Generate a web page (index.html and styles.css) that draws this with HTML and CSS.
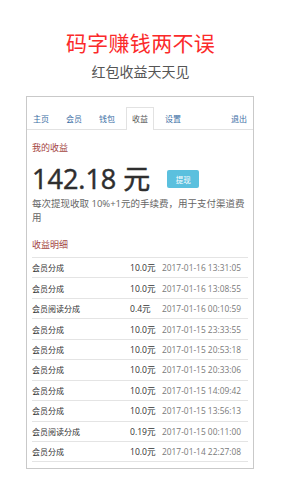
FILE: index.html
```html
<!DOCTYPE html>
<html lang="zh-CN">
<head>
  <meta charset="UTF-8" />
  <meta name="viewport" content="width=device-width, initial-scale=1.0"/>
  <title>码字赚钱两不误</title>
  <link rel="stylesheet" href="styles.css">
</head>
<body>
  <header class="hero">
    <h1>码字赚钱两不误</h1>
    <p>红包收益天天见</p>
  </header>

  <div class="screen">
    <!-- top tabs -->
    <nav class="tabs">
      <a class="tab">主页</a>
      <a class="tab">会员</a>
      <a class="tab">钱包</a>
      <a class="tab active">收益</a>
      <a class="tab">设置</a>
      <a class="tab logout">退出</a>
    </nav>

    <div class="content">
      <h2 class="section-title">我的收益</h2>
      <div class="balance">
        <span class="amount">142.18 元</span>
        <button class="withdraw">提现</button>
      </div>
      <p class="note">每次提现收取 10%+1元的手续费，用于支付渠道费用</p>

      <h2 class="section-title detail-title">收益明细</h2>
      <div class="records">
        <div class="row"><span>会员分成</span><span class="money">10.0元</span><span class="time">2017-01-16 13:31:05</span></div>
        <div class="row"><span>会员分成</span><span class="money">10.0元</span><span class="time">2017-01-16 13:08:55</span></div>
        <div class="row"><span>会员阅读分成</span><span class="money">0.4元</span><span class="time">2017-01-16 00:10:59</span></div>
        <div class="row"><span>会员分成</span><span class="money">10.0元</span><span class="time">2017-01-15 23:33:55</span></div>
        <div class="row"><span>会员分成</span><span class="money">10.0元</span><span class="time">2017-01-15 20:53:18</span></div>
        <div class="row"><span>会员分成</span><span class="money">10.0元</span><span class="time">2017-01-15 20:33:06</span></div>
        <div class="row"><span>会员分成</span><span class="money">10.0元</span><span class="time">2017-01-15 14:09:42</span></div>
        <div class="row"><span>会员分成</span><span class="money">10.0元</span><span class="time">2017-01-15 13:56:13</span></div>
        <div class="row"><span>会员阅读分成</span><span class="money">0.19元</span><span class="time">2017-01-15 00:11:00</span></div>
        <div class="row"><span>会员分成</span><span class="money">10.0元</span><span class="time">2017-01-14 22:27:08</span></div>
        <div class="row"><span>会员分成</span><span class="money">10.0元</span><span class="time">2017-01-14 21:40:16</span></div>
      </div>
    </div>
  </div>
</body>
</html>
```

FILE: styles.css
```css
* {
  box-sizing: border-box;
}

body {
  margin: 0;
  background: #fff;
  font-family: "Open Sans", "Noto Sans CJK SC", sans-serif;
  color: #333;
}

.hero {
  text-align: center;
  padding-top: 31px;
}

.hero h1 {
  margin: 0;
  font-size: 21px;
  line-height: 24px;
  font-weight: normal;
  color: #fb2a2a;
  letter-spacing: 0.3px;
}

.hero p {
  margin: 8px 0 0;
  font-size: 14px;
  line-height: 18px;
  color: #555;
}

.screen {
  margin: 15px 0 0 26px;
  width: 228px;
  height: 373px;
  border: 1px solid #c9c9c9;
  overflow: hidden;
  background: #fff;
}

/* tabs */
.tabs {
  display: flex;
  padding-top: 10px;
  border-bottom: 1px solid #e2e2e2;
}

.tab {
  display: block;
  height: 22px;
  line-height: 22px;
  padding: 0 5px;
  margin-right: 5px;
  font-size: 8px;
  color: #3b6ea5;
  border: 1px solid transparent;
  border-bottom: none;
}

.tab.active {
  color: #555;
  border-color: #e2e2e2;
  background: #fff;
  margin-bottom: -1px;
  height: 23px;
}

.tab.logout {
  margin-left: auto;
  margin-right: 0;
}

.content {
  padding: 0 5px;
}

.section-title {
  margin: 12px 0 0;
  font-size: 9px;
  line-height: 12px;
  font-weight: normal;
  color: #a4463f;
}

.balance {
  display: flex;
  align-items: center;
  margin-top: 10px;
  height: 30px;
}

.amount {
  font-size: 27px;
  line-height: 30px;
  font-weight: 400;
  -webkit-text-stroke: 0.5px #2e2e2e;
  color: #2e2e2e;
}

.withdraw {
  margin-left: 17px;
  width: 32px;
  height: 18px;
  padding: 0;
  border: none;
  border-radius: 2px;
  background: #5bc0de;
  color: #fff;
  font-family: inherit;
  font-size: 7.5px;
}

.note {
  margin: 3px 0 0;
  font-size: 9.5px;
  line-height: 14px;
  color: #666;
}

.detail-title {
  margin-top: 14px;
}

.records {
  margin-top: 6px;
}

.row {
  display: grid;
  grid-template-columns: 98px 32px auto;
  align-items: center;
  height: 20.44px;
  border-top: 1px solid #e4e4e4;
  font-size: 8px;
  color: #333;
}

.money {
  font-size: 8.6px;
  color: #333;
}

.time {
  font-size: 8.4px;
  color: #7a7a7a;
}
```
